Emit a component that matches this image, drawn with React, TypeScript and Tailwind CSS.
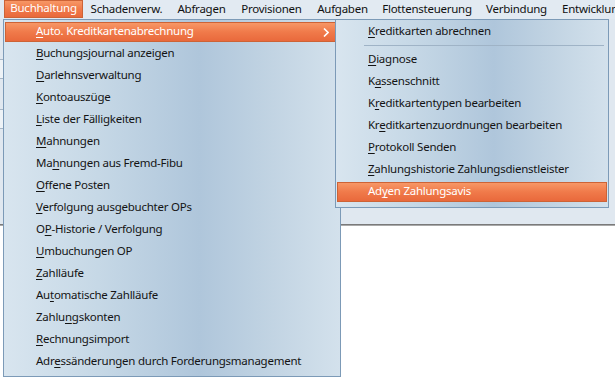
import { ReactNode } from "react";

type Item = { label: string; u: number; sep?: boolean; active?: boolean; sub?: boolean };

const barItems = [
  { label: "Buchhaltung", w: "w-[79px]", active: true },
  { label: "Schadenverw.", w: "w-[87px]" },
  { label: "Abfragen", w: "w-[63px]" },
  { label: "Provisionen", w: "w-[77px]" },
  { label: "Aufgaben", w: "w-[65px]" },
  { label: "Flottensteuerung", w: "w-[104px]" },
  { label: "Verbindung", w: "w-[75px]" },
  { label: "Entwicklung", w: "w-[90px] justify-start pl-[8px]" },
];

const mainItems: Item[] = [
  { label: "Auto. Kreditkartenabrechnung", u: 0, active: true, sub: true },
  { label: "Buchungsjournal anzeigen", u: 0 },
  { label: "Darlehnsverwaltung", u: 0 },
  { label: "Kontoauszüge", u: 0 },
  { label: "Liste der Fälligkeiten", u: 0 },
  { label: "Mahnungen", u: 0 },
  { label: "Mahnungen aus Fremd-Fibu", u: 2 },
  { label: "Offene Posten", u: 0 },
  { label: "Verfolgung ausgebuchter OPs", u: 0 },
  { label: "OP-Historie / Verfolgung", u: 1 },
  { label: "Umbuchungen OP", u: 0 },
  { label: "Zahlläufe", u: 0 },
  { label: "Automatische Zahlläufe", u: 2 },
  { label: "Zahlungskonten", u: 5 },
  { label: "Rechnungsimport", u: 0 },
  { label: "Adressänderungen durch Forderungsmanagement", u: 3 },
];

const subItems: Item[] = [
  { label: "Kreditkarten abrechnen", u: 0 },
  { label: "", u: -1, sep: true },
  { label: "Diagnose", u: 0 },
  { label: "Kassenschnitt", u: 1 },
  { label: "Kreditkartentypen bearbeiten", u: 1 },
  { label: "Kreditkartenzuordnungen bearbeiten", u: 2 },
  { label: "Protokoll Senden", u: 0 },
  { label: "Zahlungshistorie Zahlungsdienstleister", u: 0 },
  { label: "Adyen Zahlungsavis", u: 2, active: true },
];

function Mnemonic({ text, u }: { text: string; u: number }) {
  if (u < 0) return <>{text}</>;
  return (
    <>
      {text.slice(0, u)}
      <span className="underline underline-offset-2 decoration-1">{text[u]}</span>
      {text.slice(u + 1)}
    </>
  );
}

function MenuRow({ item, right }: { item: Item; right: string }) {
  if (item.sep) {
    return (
      <div className="h-[6px] pt-[2px] pl-[28px] pr-[4px]">
        <div className="h-px bg-[#9fb3c6]" />
      </div>
    );
  }
  return (
    <div className={`h-[22px] py-px ml-px ${right}`}>
      <div
        className={`h-full flex items-center pl-[30px] pr-[6px] pb-[2px] ${
          item.active
            ? "bg-[linear-gradient(to_bottom,#f79766,#f07a4a_50%,#e9693c)] border border-[#cd6336] text-white"
            : "border border-transparent text-[#141414]"
        }`}
      >
        <span className="flex-1 whitespace-nowrap">
          <Mnemonic text={item.label} u={item.u} />
        </span>
        {item.sub && (
          <svg width="6" height="9" viewBox="0 0 6 9" className="mr-[1px] mt-[2px]">
            <path d="M1 0.5 L5 4.5 L1 8.5" stroke="white" strokeWidth="1.6" fill="none" />
          </svg>
        )}
      </div>
    </div>
  );
}

function Panel({ children, className }: { children: ReactNode; className: string }) {
  return (
    <div
      className={`absolute top-[19px] border border-[#7c9ab7] bg-[linear-gradient(to_right,#d8e5ef_0%,#c6d8e6_28%,#afc6db_58%,#c2d4e3_80%,#d3e1ec_100%)] ${className}`}
    >
      {children}
    </div>
  );
}

export default function App() {
  return (
    <div
      className="relative w-[615px] h-[383px] overflow-hidden bg-white flex flex-col text-[11.5px] tracking-[-0.25px] leading-none"
      style={{ fontFamily: '"Noto Sans", "Segoe UI", sans-serif' }}
    >
      {/* menu bar */}
      <div className="h-[19px] flex items-stretch pl-[4px] bg-[#e2eaf2] text-[#111] overflow-hidden">
        {barItems.map((b) => (
          <div
            key={b.label}
            className={`${b.w} shrink-0 flex items-center justify-center whitespace-nowrap pb-[2px] ${
              b.active
                ? "h-[18px] bg-[linear-gradient(to_bottom,#f79766,#f07a4a_50%,#e9693c)] border border-[#cd6336] text-white"
                : ""
            }`}
          >
            {b.label}
          </div>
        ))}
      </div>

      {/* application window behind the menus */}
      <div className="h-[205px] bg-[#e0e8f0] flex flex-col gap-[30px] pt-[40px]">
        <div className="w-[4px] h-[20px] border border-l-0 border-[#a6b6c6] bg-[#eef3f7]" />
        <div className="w-[4px] h-[20px] border border-l-0 border-[#a6b6c6] bg-[#eef3f7]" />
      </div>
      <div className="h-[2px] bg-[#7a7a7a] border-b border-[#a9a9a9]" />
      <div className="flex-1 bg-white" />

      {/* Buchhaltung dropdown */}
      <Panel className="left-[3px] w-[338px] h-[358px] pt-px">
        {mainItems.map((it) => (
          <MenuRow key={it.label} item={it} right="mr-[3px]" />
        ))}
      </Panel>

      {/* submenu */}
      <Panel className="left-[335px] w-[274px] h-[189px] pt-px">
        {subItems.map((it, i) => (
          <MenuRow key={i} item={it} right="mr-px" />
        ))}
      </Panel>
    </div>
  );
}
